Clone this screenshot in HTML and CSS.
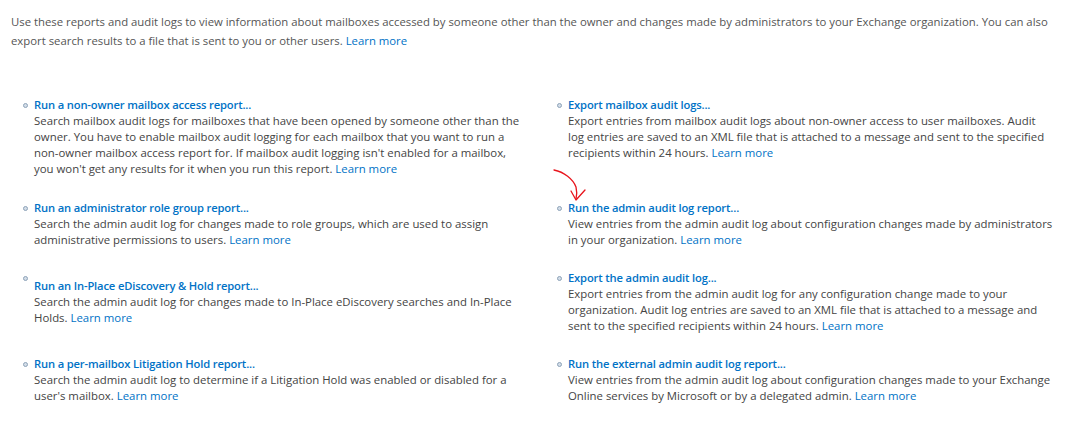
FILE: index.html
```html
<!DOCTYPE html>
<html lang="en">
<head>
    <meta charset="UTF-8">
    <title>Auditing</title>
    <link rel="stylesheet" href="styles.css">
</head>
<body>
    <div class="page">
        <p class="intro">
            Use these reports and audit logs to view information about mailboxes accessed by someone other than the owner and changes made by administrators to your Exchange organization. You can also<br>
            export search results to a file that is sent to you or other users. <a href="#">Learn more</a>
        </p>

        <div class="reports">
            <div class="report first">
                <span class="bullet"></span>
                <div>
                    <a class="report-title" href="#">Run a non-owner mailbox access report...</a>
                    <p class="report-desc">Search mailbox audit logs for mailboxes that have been opened by someone other than the<br>owner. You have to enable mailbox audit logging for each mailbox that you want to run a<br>non-owner mailbox access report for. If mailbox audit logging isn't enabled for a mailbox,<br>you won't get any results for it when you run this report. <a href="#">Learn more</a></p>
                </div>
            </div>
            <div class="report first">
                <span class="bullet"></span>
                <div>
                    <a class="report-title" href="#">Export mailbox audit logs...</a>
                    <p class="report-desc">Export entries from mailbox audit logs about non-owner access to user mailboxes. Audit<br>log entries are saved to an XML file that is attached to a message and sent to the specified<br>recipients within 24 hours. <a href="#">Learn more</a></p>
                </div>
            </div>

            <div class="report">
                <span class="bullet"></span>
                <div>
                    <a class="report-title" href="#">Run an administrator role group report...</a>
                    <p class="report-desc">Search the admin audit log for changes made to role groups, which are used to assign<br>administrative permissions to users. <a href="#">Learn more</a></p>
                </div>
            </div>
            <div class="report">
                <span class="bullet"></span>
                <div>
                    <a class="report-title" href="#">Run the admin audit log report...</a>
                    <p class="report-desc">View entries from the admin audit log about configuration changes made by administrators<br>in your organization. <a href="#">Learn more</a></p>
                </div>
                <svg class="arrow" width="40" height="40" viewBox="0 0 40 40">
                    <path d="M4 3 C14 5 23 12 26 20 C27 24 27 28 26 32" fill="none" stroke="#e8141c" stroke-width="1.3" stroke-linecap="round"/>
                    <path d="M21 24 L26 33 L35 23" fill="none" stroke="#e8141c" stroke-width="1.3" stroke-linecap="round" stroke-linejoin="round"/>
                </svg>
            </div>

            <div class="report raised">
                <span class="bullet"></span>
                <div>
                    <a class="report-title" href="#">Run an In-Place eDiscovery &amp; Hold report...</a>
                    <p class="report-desc">Search the admin audit log for changes made to In-Place eDiscovery searches and In-Place<br>Holds. <a href="#">Learn more</a></p>
                </div>
            </div>
            <div class="report">
                <span class="bullet"></span>
                <div>
                    <a class="report-title" href="#">Export the admin audit log...</a>
                    <p class="report-desc">Export entries from the admin audit log for any configuration change made to your<br>organization. Audit log entries are saved to an XML file that is attached to a message and<br>sent to the specified recipients within 24 hours. <a href="#">Learn more</a></p>
                </div>
            </div>

            <div class="report">
                <span class="bullet"></span>
                <div>
                    <a class="report-title" href="#">Run a per-mailbox Litigation Hold report...</a>
                    <p class="report-desc">Search the admin audit log to determine if a Litigation Hold was enabled or disabled for a<br>user's mailbox. <a href="#">Learn more</a></p>
                </div>
            </div>
            <div class="report">
                <span class="bullet"></span>
                <div>
                    <a class="report-title" href="#">Run the external admin audit log report...</a>
                    <p class="report-desc">View entries from the admin audit log about configuration changes made to your Exchange<br>Online services by Microsoft or by a delegated admin. <a href="#">Learn more</a></p>
                </div>
            </div>
        </div>
    </div>
</body>
</html>
```

FILE: styles.css
```css
* {
    margin: 0;
    padding: 0;
    box-sizing: border-box;
}

body {
    font-family: "Open Sans", "Noto Sans", sans-serif;
    background: #fff;
    color: #444;
}

a {
    color: #0072c6;
    text-decoration: none;
}

.page {
    padding: 12px 11px 0 11px;
}

.intro {
    font-size: 11.35px;
    line-height: 19px;
    color: #555;
    white-space: nowrap;
}

.reports {
    display: grid;
    grid-template-columns: 534px 1fr;
    grid-template-rows: 88px 78px 78px 78px;
    align-items: center;
    margin-top: 46px;
    padding-left: 12px;
}

.report {
    display: flex;
    align-items: flex-start;
    gap: 6px;
    position: relative;
}

.report.first {
    align-self: start;
}

.bullet {
    flex: none;
    width: 5px;
    height: 5px;
    margin-top: 7px;
    border-radius: 50%;
    background: #d3dde8;
    border: 1px solid #8da2b8;
}

.report.raised .bullet {
    margin-top: -1px;
}

.report-title {
    display: block;
    font-size: 11.2px;
    font-weight: 600;
    letter-spacing: -0.15px;
    line-height: 17px;
    white-space: nowrap;
}

.report-desc {
    font-size: 11.4px;
    line-height: 16px;
    white-space: nowrap;
}

.arrow {
    position: absolute;
    left: -7px;
    top: -32px;
}
```
